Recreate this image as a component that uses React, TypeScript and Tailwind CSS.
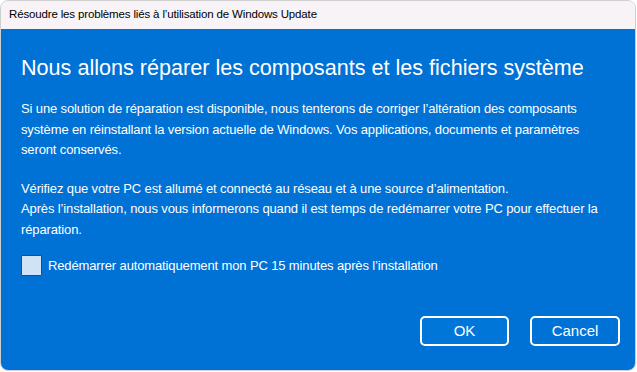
import React from "react";

export default function App() {
  const font = { fontFamily: '"Liberation Sans", Arial, sans-serif' };
  return (
    <div className="w-[637px] h-[372px] bg-white" style={font}>
      <div className="w-[636px] h-[371px] rounded-[8px] border border-[#cfcfcf] overflow-hidden flex flex-col">
        <div className="h-[28px] bg-[#f7f3f7] flex items-center px-[8px] text-[11.5px] tracking-[-0.15px] text-black shrink-0">
          Résoudre les problèmes liés à l’utilisation de Windows Update
        </div>
        <div className="flex-1 bg-[#0071d5] text-white px-[20px] flex flex-col">
          <h1 className="text-[21.6px] leading-[28px] mt-[25px] whitespace-nowrap">
            Nous allons réparer les composants et les fichiers système
          </h1>
          <div className="text-[13px] tracking-[-0.13px] leading-[20.5px] mt-[17px] whitespace-nowrap">
            <p>
              Si une solution de réparation est disponible, nous tenterons de corriger l’altération des composants
              <br />
              système en réinstallant la version actuelle de Windows. Vos applications, documents et paramètres
              <br />
              seront conservés.
            </p>
            <p className="mt-[18px]">
              Vérifiez que votre PC est allumé et connecté au réseau et à une source d’alimentation.
              <br />
              Après l’installation, nous vous informerons quand il est temps de redémarrer votre PC pour effectuer la
              <br />
              réparation.
            </p>
          </div>
          <label className="flex items-center mt-[15px] text-[13px] tracking-[-0.13px]">
            <span className="w-[21px] h-[21px] bg-[#cfe2f6] border border-[#1d4f80] rounded-[1px] shrink-0" />
            <span className="ml-[6px]">Redémarrer automatiquement mon PC 15 minutes après l’installation</span>
          </label>
          <div className="flex justify-end gap-[21px] mt-[40px]">
            <button className="w-[89px] h-[30px] border-2 border-white rounded-[5px] text-[15px] bg-[#0076d8]">OK</button>
            <button className="w-[90px] h-[30px] border-2 border-white rounded-[5px] text-[15px] mr-[-5px]">Cancel</button>
          </div>
        </div>
      </div>
    </div>
  );
}
